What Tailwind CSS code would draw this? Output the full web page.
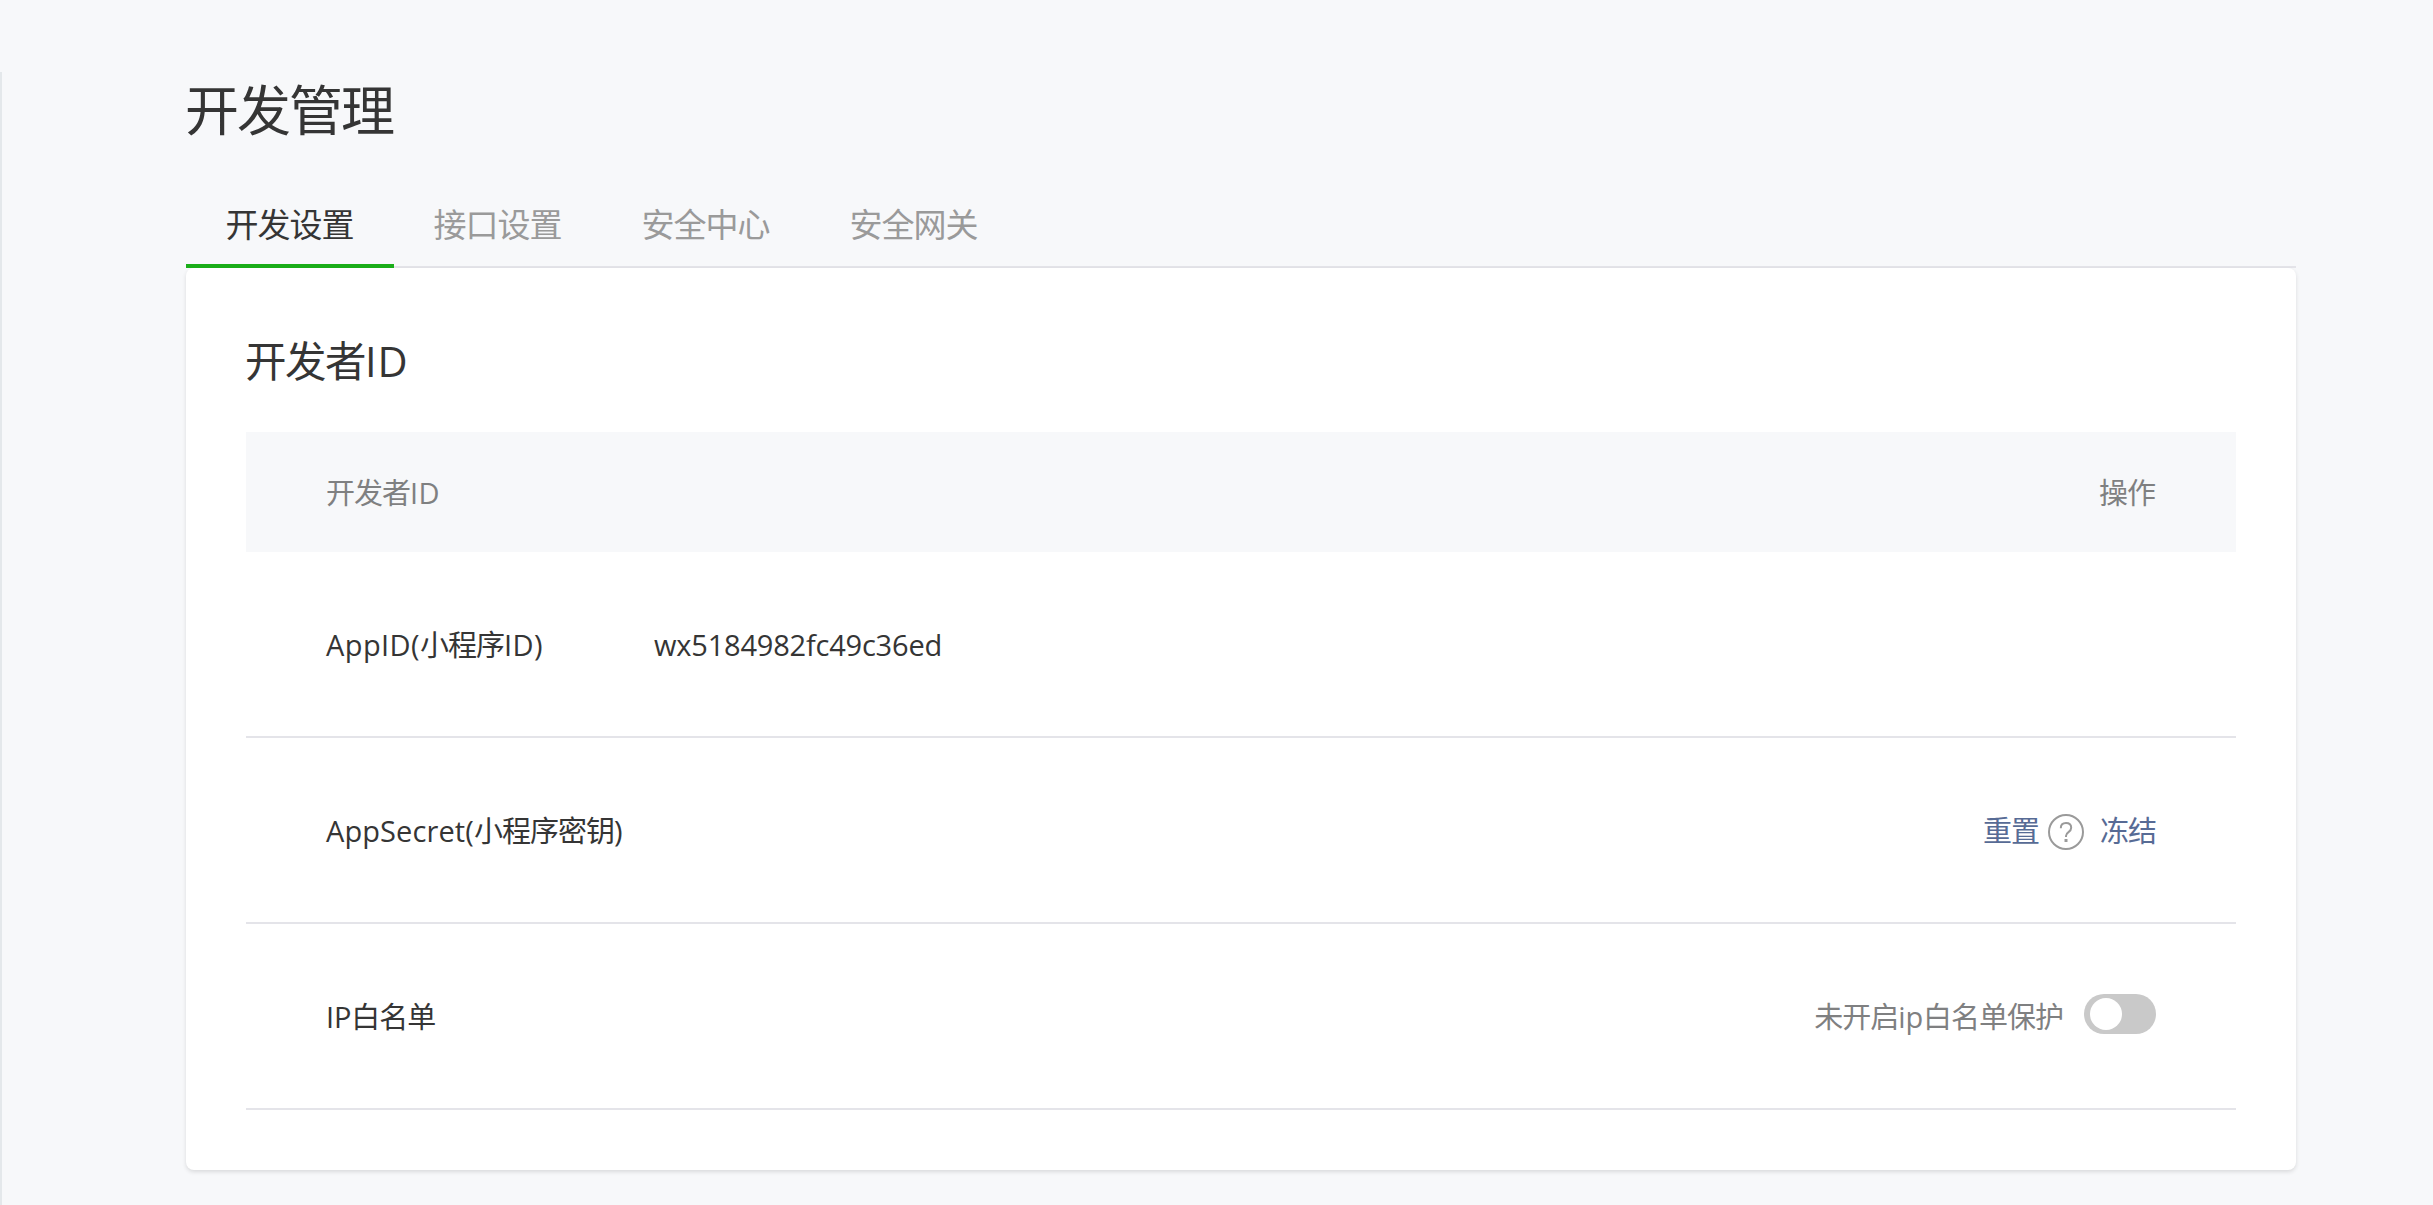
<!DOCTYPE html>
<html lang="zh-CN">
<head>
    <meta charset="UTF-8">
    <title>开发管理</title>
    <script src="https://cdn.jsdelivr.net/npm/@tailwindcss/browser@4"></script>
</head>
<body class="bg-[#f7f8fa] text-[#353535] font-['Open_Sans','Noto_Sans_CJK_SC',sans-serif] text-[29px] leading-[40px] tracking-[-1px] h-[1205px] overflow-hidden pt-[72px]">
    <div class="h-full border-l-2 border-[#e4e8eb] pl-46 pr-[137px]">
        <h1 class="text-[54px] leading-[76px] tracking-[-2px] -ml-px h-[120px]">开发管理</h1>

        <!-- Tabs -->
        <nav class="flex h-[76px] border-b-2 border-[#e4e4e9] text-[33px] leading-[66px] text-[#9a9a9a]">
            <a href="#" class="w-52 h-[76px] pr-px text-center text-[#353535] border-b-4 border-[#1aad19]">开发设置</a>
            <a href="#" class="w-52 pr-px text-center">接口设置</a>
            <a href="#" class="w-52 pr-px text-center">安全中心</a>
            <a href="#" class="w-52 pr-px text-center">安全网关</a>
        </nav>

        <!-- Developer ID card -->
        <main class="bg-white rounded-lg h-[902px] px-15 pt-15 shadow-[0_2px_4px_rgba(0,0,0,0.12)]">
            <h2 class="text-[41.5px] leading-[66px] tracking-[-1.5px] -ml-px h-26">开发者<span class="tracking-[0.8px]">ID</span></h2>

            <div class="flex justify-between items-center h-30 px-20 bg-[#f7f8fa] text-[#7f8081]">
                <span class="mt-0.5">开发者<span class="tracking-[0.4px]">ID</span></span>
                <span class="mt-0.5 mr-px">操作</span>
            </div>

            <div class="flex items-center h-[186px] px-20 border-b-2 border-[#e4e4e9]">
                <span class="w-82 mt-px"><span class="tracking-[0.4px]">AppID(</span>小程序<span class="tracking-[0.5px]">ID)</span></span>
                <span class="mt-px tracking-[-0.2px]">wx5184982fc49c36ed</span>
            </div>

            <div class="flex items-center justify-between h-[186px] px-20 border-b-2 border-[#e4e4e9]">
                <span class="mt-px"><span class="tracking-[0.1px]">AppSecret(</span>小程序密钥)</span>
                <div class="flex items-center text-[#576b95]">
                    <a href="#" class="mt-px">重置</a>
                    <svg class="w-9 h-9 ml-[9px] mr-4 mt-1" viewBox="0 0 36 36" fill="none" stroke="#9a9a9a" stroke-width="2">
                        <circle cx="18" cy="18" r="17"/>
                        <path d="M12.8 14.3c0-3.3 2-5.2 5.2-5.2 3.1 0 5.2 1.9 5.2 4.7 0 1.9-.9 3.1-2.7 4.3-1.8 1.2-2.5 2.1-2.5 3.9v1"/>
                        <path d="M16.5 26.5h3" stroke-width="3"/>
                    </svg>
                    <a href="#" class="mt-px">冻结</a>
                </div>
            </div>

            <div class="flex items-center justify-between h-[186px] px-20 border-b-2 border-[#e4e4e9]">
                <span class="mt-px"><span class="tracking-[-0.2px]">IP</span>白名单</span>
                <div class="flex items-center">
                    <span class="text-[#7f8081] mt-px mr-[21px]">未开启<span class="tracking-[-0.2px]">ip</span>白名单保护</span>
                    <button class="w-18 h-10 -mt-1 rounded-full bg-[#c9c9c9] pl-1.5 flex items-center">
                        <span class="w-8 h-8 rounded-full bg-white"></span>
                    </button>
                </div>
            </div>
        </main>
    </div>
</body>
</html>
